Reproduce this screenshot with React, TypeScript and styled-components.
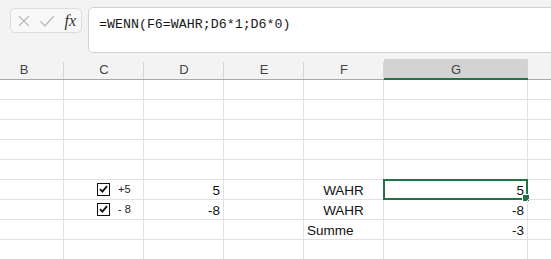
import { Fragment } from 'react';
import styled, { createGlobalStyle } from 'styled-components';

const GlobalStyle = createGlobalStyle`
  html, body {
    margin: 0;
    padding: 0;
    background: #ffffff;
    overflow: hidden;
  }
  * {
    box-sizing: border-box;
  }
`;

const Page = styled.div`
  width: 551px;
  height: 259px;
  overflow: hidden;
  font-family: "Liberation Sans", Arial, sans-serif;
  background: #ffffff;
`;

const FormulaBar = styled.div`
  display: flex;
  align-items: flex-start;
  height: 59px;
  padding: 7px 0 0 10px;
  background: #f3f3f3;
`;

const ActionGroup = styled.div`
  display: flex;
  align-items: center;
  gap: 8px;
  width: 72px;
  height: 25px;
  margin-top: 1px;
  padding: 0 5px 0 6px;
  background: #f8f8f8;
  border: 1px solid #dcdcdc;
  border-radius: 5px;
`;

const Fx = styled.span`
  margin-left: 2px;
  font-family: "Liberation Serif", "Times New Roman", serif;
  font-style: italic;
  font-size: 16px;
  color: #333333;
`;

const FormulaInput = styled.div`
  flex: 1;
  height: 46px;
  margin-left: 6px;
  margin-right: -10px;
  padding: 9px 0 0 10px;
  background: #ffffff;
  border: 1px solid #d2d2d2;
  border-radius: 5px;
  font-family: "Liberation Mono", "DejaVu Sans Mono", monospace;
  font-size: 13.3px;
  color: #1a1a1a;
  white-space: nowrap;
`;

const Sheet = styled.div`
  display: grid;
  grid-template-columns: 80px 80px 80px 80px 80px 144px 120px;
  margin-left: -16px;
`;

const HeaderCell = styled.div<{ $active?: boolean }>`
  position: relative;
  height: 21px;
  display: flex;
  align-items: center;
  justify-content: center;
  font-size: 13px;
  color: #444444;
  background: ${({ $active }) => ($active ? '#d3d3d3' : '#f3f3f3')};
  border-bottom: ${({ $active }) => ($active ? '2px solid #217346' : '1px solid #a8a8a8')};
  padding-top: ${({ $active }) => ($active ? '1px' : '0')};

  &::after {
    content: '';
    position: absolute;
    right: 0;
    top: 3px;
    bottom: 0;
    width: 1px;
    background: #d6d6d6;
  }
`;

const Cell = styled.div<{ $align?: 'left' | 'center' | 'right' }>`
  position: relative;
  height: 20px;
  display: flex;
  align-items: center;
  justify-content: ${({ $align }) =>
    $align === 'right' ? 'flex-end' : $align === 'center' ? 'center' : 'flex-start'};
  padding: 1px 3px 0 3px;
  font-size: 13.5px;
  color: #111111;
  border-right: 1px solid #e1e1e1;
  border-bottom: 1px solid #e1e1e1;
`;

const Selection = styled.div`
  position: absolute;
  left: -1px;
  top: -1px;
  right: -1px;
  bottom: -1px;
  border: 2px solid #217346;
  pointer-events: none;

  &::after {
    content: '';
    position: absolute;
    right: -4px;
    bottom: -4px;
    width: 6px;
    height: 6px;
    background: #217346;
    border: 1px solid #ffffff;
  }
`;

const CheckWrap = styled.div`
  display: flex;
  align-items: center;
  gap: 8px;
  margin-left: 30px;
  margin-top: -2px;
  font-size: 11px;
  color: #222222;
`;

const Box = styled.span`
  display: inline-flex;
  align-items: center;
  justify-content: center;
  width: 13px;
  height: 13px;
  border: 1px solid #111111;
  background: #ffffff;
`;

const Value = styled.span`
  position: relative;
  z-index: 1;
`;

const columns = ['B', 'C', 'D', 'E', 'F', 'G', ''];

type Row = { c?: string; d?: string; f?: string; fAlign?: 'left' | 'center'; g?: string; sel?: boolean };

const rows: Row[] = [
  {},
  {},
  {},
  {},
  {},
  { c: '+5', d: '5', f: 'WAHR', fAlign: 'center', g: '5', sel: true },
  { c: '- 8', d: '-8', f: 'WAHR', fAlign: 'center', g: '-8' },
  { f: 'Summe', fAlign: 'left', g: '-3' },
  {},
];

const CheckIcon = () => (
  <svg width="9" height="8" viewBox="0 0 9 8">
    <path d="M1 4.2 L3.4 6.6 L8 1.2" fill="none" stroke="#111" strokeWidth="1.9" />
  </svg>
);

export default function App() {
  return (
    <Page>
      <GlobalStyle />
      <FormulaBar>
        <ActionGroup>
          <svg width="14" height="14" viewBox="0 0 14 14">
            <path d="M2 2 L12 12 M12 2 L2 12" stroke="#b4b4b4" strokeWidth="1.3" />
          </svg>
          <svg width="16" height="14" viewBox="0 0 16 14">
            <path d="M1.5 7.5 L6 12 L15 2" fill="none" stroke="#b4b4b4" strokeWidth="1.3" />
          </svg>
          <Fx>fx</Fx>
        </ActionGroup>
        <FormulaInput>=WENN(F6=WAHR;D6*1;D6*0)</FormulaInput>
      </FormulaBar>
      <Sheet>
        {columns.map((col, i) => (
          <HeaderCell key={i} $active={col === 'G'}>
            {col}
          </HeaderCell>
        ))}
        {rows.map((row, r) => (
          <Fragment key={r}>
            <Cell />
            <Cell>
              {row.c && (
                <CheckWrap>
                  <Box>
                    <CheckIcon />
                  </Box>
                  {row.c}
                </CheckWrap>
              )}
            </Cell>
            <Cell $align="right">{row.d}</Cell>
            <Cell />
            <Cell $align={row.fAlign}>{row.f}</Cell>
            <Cell $align="right">
              {row.sel && <Selection />}
              <Value>{row.g}</Value>
            </Cell>
            <Cell />
          </Fragment>
        ))}
      </Sheet>
    </Page>
  );
}
